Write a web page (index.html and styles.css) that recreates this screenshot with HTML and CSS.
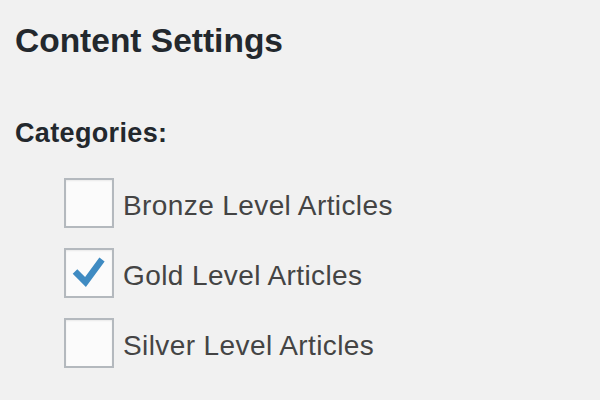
FILE: index.html
```html
<!DOCTYPE html>
<html lang="en">
<head>
  <meta charset="UTF-8">
  <title>Content Settings</title>
  <link rel="stylesheet" href="styles.css">
</head>
<body>
  <div class="settings">
    <h2 class="title">Content Settings</h2>
    <h3 class="section">Categories:</h3>
    <ul class="category-list">
      <li class="category">
        <span class="box"></span>
        <span class="label">Bronze Level Articles</span>
      </li>
      <li class="category">
        <span class="box">
          <svg class="check" viewBox="0 0 46 46" width="46" height="46"><path d="M9 21.5 L19.5 32 L36 9.5"/></svg>
        </span>
        <span class="label">Gold Level Articles</span>
      </li>
      <li class="category">
        <span class="box"></span>
        <span class="label">Silver Level Articles</span>
      </li>
    </ul>
  </div>
</body>
</html>
```

FILE: styles.css
```css
html, body {
  margin: 0;
  background: #f1f1f1;
}

body {
  font-family: "Liberation Sans", Arial, sans-serif;
  color: #23282d;
}

.settings {
  padding: 21px 15px 0 15px;
}

.title {
  margin: 0;
  font-size: 33.5px;
  line-height: 40px;
  font-weight: bold;
}

.section {
  margin: 57px 0 0 0;
  font-size: 27px;
  line-height: 30px;
  letter-spacing: 0.35px;
  font-weight: bold;
}

.category-list {
  list-style: none;
  margin: 30px 0 0 0;
  padding: 0 0 0 49px;
}

.category {
  display: flex;
  align-items: center;
  height: 50px;
  margin-bottom: 20px;
}

.box {
  box-sizing: border-box;
  width: 50px;
  height: 50px;
  border: 2px solid #b4b9be;
  background: #fbfbfb;
  box-shadow: inset 0 1px 2px rgba(0, 0, 0, 0.07);
}

.check {
  display: block;
  fill: none;
  stroke: #3f8bc2;
  stroke-width: 6.5;
}

.label {
  margin-left: 9px;
  padding-top: 6px;
  font-size: 28px;
  letter-spacing: 0.4px;
  color: #444;
}
```
